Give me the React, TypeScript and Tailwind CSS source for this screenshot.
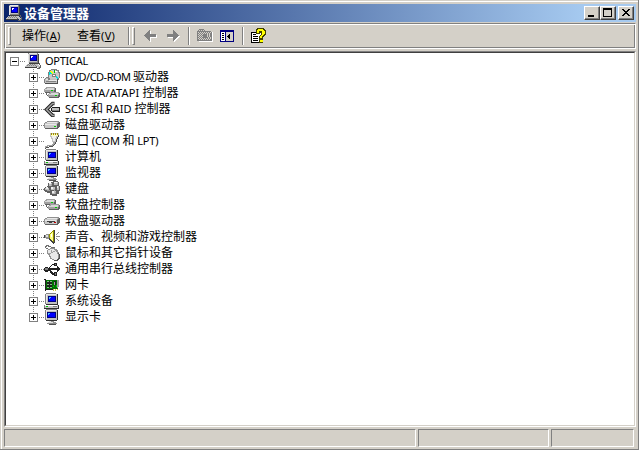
import type { ReactNode } from 'react';

function Icon({ children, size = 16 }: { children: ReactNode; size?: number }) {
    return (
        <svg width={size} height={16} viewBox={`0 0 ${size} 16`} shapeRendering="crispEdges" className="block shrink-0">
            {children}
        </svg>
    );
}

/* Root node and title bar: PC with a keyboard and a connector in front */
function ManagerIcon() {
    return (
        <Icon>
            <path fill="#c0c0c0" d="M4 1h8v9H4z" />
            <path fill="#e8e8e8" d="M4 0h8v1H4zM3 1h1v9H3z" />
            <path fill="#808080" d="M3 0h1v1H3zM12 0h1v10h-1zM4 9h8v1H4z" />
            <path fill="#404040" d="M13 1h1v10H4v-1h9z" />
            <path fill="#000080" d="M5 2h7v6H5z" />
            <path fill="#0000ff" d="M6 3h5v4H6z" />
            <path fill="#fff" d="M6 3h2v1H7v1H6z" />
            <path fill="#c0c0c0" d="M2 11h10v1h1v2H0v-1h1v-1h1z" />
            <path fill="#808080" d="M3 11h1v1H3zM5 11h1v1H5zM7 11h1v1H7zM9 11h1v1H9zM2 12h1v1H2zM4 12h1v1H4zM6 12h1v1H6zM8 12h1v1H8zM10 12h1v1h-1z" />
            <path fill="#404040" d="M0 14h12v1H0z" />
            <path fill="#c0c0c0" d="M11 11h2v1h1v1h1v2h-2v-1h-1v-1h-1z" />
            <path fill="#606060" d="M14 10h1v2h1v3h-1v1h-3v-1h2v-1h1v-2h-1zM11 13h1v1h-1z" />
        </Icon>
    );
}

function DvdIcon() {
    return (
        <Icon>
            <path fill="#808080" d="M7 0h6v1h2v2h1v6h-1v2h-2v2H7v-1H5v-1H4V3h1V1h2z" />
            <path fill="#c8c8c8" d="M7 1h5v1h2v2h1v5h-1v1h-1v1H7v-1H6V9H5V3h1V2h1z" />
            <path fill="#ffff00" d="M6 2h2v1h1v2H8V4H6z" />
            <path fill="#00e0e0" d="M5 3h2v1h1v1H6v1H5zM12 7h1v1h1v2h-1V9h-1z" />
            <path fill="#00c000" d="M10 1h1v3h-1z" />
            <path fill="#808080" d="M8 5h4v3H8z" />
            <path fill="#fff" d="M9 6h2v1H9zM11 2h2v1h-2z" />
            <path fill="#c0c0c0" d="M2 8h3v2h8v4H0v-4h2z" />
            <path fill="#808080" d="M2 8h2v1H2v1H1v1H0v-1h1V9h1zM4 8h1v2h1v1H4zM2 12h10v1H2zM0 11h1v3H0z" />
            <path fill="#e8e8e8" d="M2 10h2v1H2zM5 11h8v1H5z" />
            <path fill="#505050" d="M1 14h12v-4h1v5H1z" />
        </Icon>
    );
}

function ControllerIcon() {
    return (
        <Icon>
            <path fill="#a0a0a0" d="M2 2h9v1h1v4h-1v1H1V7H0V4h1V3h1z" />
            <path fill="#d8d8d8" d="M3 3h7v1H3zM1 4h9v1H1z" />
            <path fill="#606060" d="M11 3h1v4h-1v1H1V7h9V5h1z" />
            <path fill="#606060" d="M2 8h1v2h1v1H3v-1H2z" />
            <path fill="#a0a0a0" d="M6 7h9v1h1v4h-1v1H5v-1H4V9h1V8h1z" />
            <path fill="#d8d8d8" d="M7 8h7v1H7zM5 9h9v1H5z" />
            <path fill="#606060" d="M15 8h1v4h-1v1H5v-1h9v-2h1z" />
            <path fill="#00d000" d="M7 5h2v1H7zM11 10h2v1h-2z" />
        </Icon>
    );
}

function ScsiIcon() {
    return (
        <Icon>
            <g shapeRendering="auto" fill="none" strokeLinejoin="miter">
                <path stroke="#202020" strokeWidth="3.6" d="M10.5 2.5 8.5 2.5 2.5 8.5 8.5 14.5 10.5 14.5" />
                <path stroke="#a0a0a0" strokeWidth="1.5" d="M10.5 2.5 8.5 2.5 2.5 8.5 8.5 14.5 10.5 14.5" />
            </g>
            <path fill="#202020" d="M8 6h8v5H8v-1H7V7h1z" />
            <path fill="#c0c0c0" d="M8 7h7v3H8z" />
            <path fill="#808080" d="M8 9h7v1H8z" />
        </Icon>
    );
}

function DriveIcon({ floppy = false }: { floppy?: boolean }) {
    return (
        <Icon>
            <path fill="#909090" d="M3 4h12v1h1v5h-1v1h-1v1H1v-1H0V6h1V5h2z" />
            <path fill="#c8c8c8" d="M3 5h11v1H3zM1 6h12v5H1z" />
            <path fill="#e8e8e8" d="M3 5h10v1H3zM1 7h11v1H1z" />
            <path fill="#606060" d="M15 5h1v5h-1v1h-1v1H1v-1h12V7h1V6h1z" />
            {floppy ? (
                <>
                    <path fill="#404040" d="M3 8h8v1H3zM5 9h3v1H5z" />
                    <path fill="#c00000" d="M10 9h2v1h-2z" />
                </>
            ) : (
                <path fill="#00d000" d="M10 9h2v1h-2z" />
            )}
        </Icon>
    );
}

function PortIcon() {
    return (
        <Icon>
            <path fill="#c0c0c0" d="M6 0h9v4h-1v2h-1v3h-1v1H9V9H8V6H7V4H6z" />
            <path fill="#ffffc0" d="M7 1h7v2H7z" />
            <path fill="#a09000" d="M7 0h1v2H7zM9 0h1v2H9zM11 0h1v2h-1zM13 0h1v2h-1z" />
            <path fill="#f0f0f0" d="M8 3h4v2h-1v3H9V5H8z" />
            <path fill="#505050" d="M14 2h1v2h-1v2h-1v3h-1v2h-1v1h-1v1H9v1H5v1H2v1H1v-1h1v-1h3v-1h4v-1h1v-1h1V9h1V6h1V4h1z" />
            <path fill="#a0a0a0" d="M9 9h2v2h-1v1H9v1H4v1H2v1H1v-2h2v-1h5v-1h1z" />
        </Icon>
    );
}

function ComputerIcon() {
    return (
        <Icon>
            <path fill="#c0c0c0" d="M2 1h11v10H2z" />
            <path fill="#808080" d="M1 1h1v10H1zM2 0h10v1H2z" />
            <path fill="#e8e8e8" d="M2 1h10v1H2zM2 2h1v8H2z" />
            <path fill="#303030" d="M13 1h1v11H2v-1h11z" />
            <path fill="#000080" d="M4 3h8v6H4z" />
            <path fill="#0000ff" d="M5 4h6v4H5z" />
            <path fill="#40c0ff" d="M5 4h2v1H6v1H5z" />
            <path fill="#c8c8c8" d="M1 12h13v3H1z" />
            <path fill="#fff" d="M1 12h12v1H1z" />
            <path fill="#808080" d="M0 12h1v3H0zM9 13h4v1H9z" />
            <path fill="#00c000" d="M2 13h2v1H2z" />
            <path fill="#303030" d="M14 12h1v4H0v-1h14z" />
        </Icon>
    );
}

function MonitorIcon() {
    return (
        <Icon>
            <path fill="#c0c0c0" d="M2 1h11v10H2z" />
            <path fill="#808080" d="M2 0h11v1H2zM1 1h1v10H1z" />
            <path fill="#e8e8e8" d="M2 1h10v1H2zM2 2h1v8H2z" />
            <path fill="#303030" d="M13 1h1v10h-1v1H2v-1h11z" />
            <path fill="#000080" d="M3 3h9v6H3z" />
            <path fill="#0000ff" d="M4 4h7v4H4z" />
            <path fill="#40c0ff" d="M4 4h2v1H5v1H4z" />
            <path fill="#909090" d="M5 12h5v1h2v1h1v1H3v-1h1v-1h1z" />
            <path fill="#e0e0e0" d="M5 12h2v1h2v1H4v-1h1z" />
            <path fill="#505050" d="M5 15h7v1H5z" />
        </Icon>
    );
}

function KeyboardIcon() {
    return (
        <Icon>
            <path fill="#606060" d="M4 2h3V1h2V0h5v1h1v4h1v5h-1v3h-2v2H8v-1H6v-2H3v-1H1v-1H0V7h1V6h2V5h1z" />
            <path fill="#c0c0c0" d="M5 2h3v3H5zM10 1h4v3h-4zM1 7h4v2H1zM7 6h4v3H7zM8 10h4v3H8zM13 5h2v4h-2z" />
            <path fill="#f0f0f0" d="M5 2h2v1H5zM10 1h3v1h-3zM2 6h2v2H2zM7 6h2v2H7zM13 5h1v2h-1zM8 10h2v2H8z" />
            <path fill="#a0a0a0" d="M7 3h1v2H7zM13 2h1v2h-1zM3 9h3v1H3zM10 8h1v2h-1zM11 11h1v2h-1z" />
        </Icon>
    );
}

function SoundIcon() {
    return (
        <Icon>
            <path fill="#909000" d="M9 1h1v13H9v-1H8v-1H7v-1H6v-1H5V5h1V4h1V3h1V2h1z" />
            <path fill="#ffff80" d="M6 5h1V4h1V3h1v9H8v-1H7v-1H6z" />
            <path fill="#fff" d="M7 5h1v3H7z" />
            <path fill="#909090" d="M1 6h1V5h3v5H2V9H1z" />
            <path fill="#e0e0e0" d="M2 6h2v2H2z" />
            <path fill="#404040" d="M0 6h1v3H0zM1 9h1v1h3v1h1v1h1v1h1v1h1v1h1v-1h1V1h-1v12H9v-1H8v-1H7v-1H6V9H5v1H2V9z" />
            <path fill="#909090" d="M12 5h1V4h1V3h1v1h-1v1h-1v1h-1zM12 7h4v1h-4zM12 9h1v1h1v1h1v1h-1v-1h-1v-1h-1z" />
        </Icon>
    );
}

function MouseIcon() {
    return (
        <Icon>
            <path fill="#707070" d="M2 0h3v1h2v1h4v1H7V2H4V1H3v1H1V1h1zM1 2h1v1h2v1H2V3H1z" />
            <path fill="#909090" d="M6 3h5v1h2v1h1v2h1v2h1v5h-1v1h-1v1h-4v-1H8v-1H6v-2H5v-2H4V9H3V5h1V4h2z" />
            <path fill="#e8e8e8" d="M6 4h4v1h2v2h1v2h1v5h-1v1h-3v-1H8v-1H7v-2H6V9H5V8H4V5h2z" />
            <path fill="#a0a0a0" d="M4 8h3V7h2V6h2V5h1v1h-1v1H9v1H7v1H4zM7 5h1v2H7z" />
            <path fill="#505050" d="M14 8h1v1h1v5h-1v1h-1v1h-4v-1h3v-1h1v-1h1V9h-1z" />
        </Icon>
    );
}

function UsbIcon() {
    return (
        <Icon>
            <path fill="#202020" d="M0 7h1V6h3v1h1V6h1V5h1V4h1V3h2V2h3v3h-3V4H8v1H7v1H6v1h7V5h1v1h1v1h1v2h-1v1h-1v1h-1V9H7v1h1v1h1v1h1v-1h3v4h-3v-1H8v-1H7v-1H6v-2H4v1H1v-1H0z" />
            <path fill="#808080" d="M1 7h3v2H1zM11 3h1v1h-1zM11 12h1v2h-1z" />
        </Icon>
    );
}

function NetworkIcon() {
    return (
        <Icon>
            <path fill="#007000" d="M2 3h12v9H2z" />
            <path fill="#202020" d="M0 2h2v12H1V3H0zM3 4h5v7H3zM10 4h2v4h-2zM2 12h7v1H2z" />
            <path fill="#80c080" d="M3 4h2v1H3zM6 4h2v1H6zM3 7h2v1H3zM6 7h2v1H6zM3 10h2v1H3zM6 10h2v1H6z" />
            <path fill="#00d000" d="M9 9h1v1H9zM12 8h1v2h-1z" />
            <path fill="#a0a0a0" d="M10 5h1v3h-1zM13 3h2v7h-1v1h-1z" />
            <path fill="#d0c040" d="M9 12h1v2H9zM11 12h1v2h-1zM13 12h1v1h-1z" />
        </Icon>
    );
}

const devices = [
    { label: 'DVD/CD-ROM 驱动器', icon: <DvdIcon />, tracking: 'tracking-[-0.5px]' },
    { label: 'IDE ATA/ATAPI 控制器', icon: <ControllerIcon />, tracking: 'tracking-[0.15px]' },
    { label: 'SCSI 和 RAID 控制器', icon: <ScsiIcon />, tracking: 'tracking-[0.05px]' },
    { label: '磁盘驱动器', icon: <DriveIcon /> },
    { label: '端口 (COM 和 LPT)', icon: <PortIcon />, tracking: 'tracking-[-0.15px]' },
    { label: '计算机', icon: <ComputerIcon /> },
    { label: '监视器', icon: <MonitorIcon /> },
    { label: '键盘', icon: <KeyboardIcon /> },
    { label: '软盘控制器', icon: <ControllerIcon /> },
    { label: '软盘驱动器', icon: <DriveIcon floppy /> },
    { label: '声音、视频和游戏控制器', icon: <SoundIcon /> },
    { label: '鼠标和其它指针设备', icon: <MouseIcon /> },
    { label: '通用串行总线控制器', icon: <UsbIcon /> },
    { label: '网卡', icon: <NetworkIcon /> },
    { label: '系统设备', icon: <ComputerIcon /> },
    { label: '显示卡', icon: <MonitorIcon /> },
];

// Latin runs are set a pixel smaller than the Chinese ones
function Label({ text, tracking = 'tracking-[-0.25px]' }: { text: string; tracking?: string }) {
    const runs = text.match(/[\x20-\x7e]+|[^\x20-\x7e]+/g) ?? [];

    return (
        <span className="flex h-4 items-center whitespace-pre leading-4">
            {runs.map((run, i) => (
                <span key={i} className={run.charCodeAt(0) < 128 ? `text-[11px] ${tracking}` : 'text-[12px]'}>
                    {run}
                </span>
            ))}
        </span>
    );
}

function Expander({ open = false }: { open?: boolean }) {
    return (
        <svg width="9" height="16" viewBox="0 0 9 16" shapeRendering="crispEdges" className="block shrink-0">
            <path fill="#808080" d="M0 4h9v9H0z" />
            <path fill="#fff" d="M1 5h7v7H1z" />
            <path fill="#000" d="M2 8h5v1H2z" />
            {!open && <path fill="#000" d="M4 6h1v5H4z" />}
        </svg>
    );
}

function Dots() {
    return (
        <svg width="6" height="16" viewBox="0 0 6 16" shapeRendering="crispEdges" className="block shrink-0">
            <path fill="#808080" d="M1 8h1v1H1zM3 8h1v1H3zM5 8h1v1H5z" />
        </svg>
    );
}

function CaptionButton({ children }: { children: ReactNode }) {
    return (
        <button className="h-[14px] w-4 border border-t-white border-l-white border-r-[#404040] border-b-[#404040] bg-[#d4d0c8] shadow-[inset_-1px_-1px_0_#808080]">
            <svg width="14" height="12" viewBox="0 0 14 12" shapeRendering="crispEdges" className="block">
                {children}
            </svg>
        </button>
    );
}

function Gripper() {
    return <div className="h-[18px] w-[3px] shrink-0 border border-t-white border-l-white border-r-[#808080] border-b-[#808080]" />;
}

function Separator() {
    return <div className="h-[18px] w-[2px] shrink-0 border-l border-r border-l-[#808080] border-r-white" />;
}

function MenuItem({ text, accessKey }: { text: string; accessKey: string }) {
    return (
        <span className="flex w-[55px] shrink-0 items-center text-[12px] leading-4">
            {text}
            <span className="text-[11px] tracking-[0.3px]">
                (<span className="underline underline-offset-1">{accessKey}</span>)
            </span>
        </span>
    );
}

const arrowLeft = 'M0 5h1V4h1V3h1V2h1V1h1V0h1v4h6v3H6v4H5v-1H4V9H3V8H2V7H1V6H0z';
const arrowRight = 'M12 5h-1V4h-1V3H9V2H8V1H7V0H6v4H0v3h6v4h1v-1h1V9h1V8h1V7h1V6h1z';

function ArrowIcon({ d }: { d: string }) {
    return (
        <svg width="14" height="12" viewBox="0 0 14 12" shapeRendering="crispEdges" className="block shrink-0">
            <path d={d} fill="#fff" transform="translate(1 1)" />
            <path d={d} fill="#808080" />
        </svg>
    );
}

function Toolbar() {
    return (
        <div className="flex h-[26px] items-center border border-[#808080] border-r-white border-b-white pl-[3px] shadow-[inset_1px_1px_0_#fff,inset_-1px_-1px_0_#808080]">
            <Gripper />
            <div className="flex pl-[11px]">
                <MenuItem text="操作" accessKey="A" />
                <MenuItem text="查看" accessKey="V" />
            </div>
            <div className="-ml-1 flex gap-[2px]">
                <Separator />
                <Gripper />
            </div>
            <div className="flex flex-1 items-center pl-[9px]">
                <ArrowIcon d={arrowLeft} />
                <div className="w-[9px]" />
                <ArrowIcon d={arrowRight} />
                <div className="w-[7px]" />
                <Separator />
                <div className="w-[7px]" />
                <Icon>
                    <path fill="#fff" d="M3 3h5v1h8v10H2v-1h13V4H8z" />
                    <path fill="#808080" d="M2 1h5v1h1v1h6v1h1v9H0V3h1V2h1z" />
                    <path
                        fill="none"
                        stroke="#d4d0c8"
                        strokeDasharray="1 1"
                        d="M2 2.5h5M1 4.5h13M2 5.5h12M1 6.5h5M10 6.5h4M2 7.5h4M10 7.5h4M1 8.5h5M10 8.5h4M2 9.5h3M11 9.5h3M1 10.5h13M2 11.5h12"
                    />
                </Icon>
                <div className="w-[7px]" />
                <Icon size={15}>
                    <path fill="#000080" d="M0 2h14v12H0z" />
                    <path fill="#fff" d="M1 4h4v9H1z" />
                    <path fill="#d4d0c8" d="M6 4h7v9H6z" />
                    <path fill="#000" d="M2 5h2v1H2zM2 7h2v1H2zM2 9h2v1H2zM2 11h2v1H2zM7 8h1V7h1V6h1v5H9v-1H8V9H7z" />
                </Icon>
                <div className="w-[7px]" />
                <Separator />
                <div className="w-[7px]" />
                <Icon>
                    <path fill="#000" d="M0 4h9v11H0z" />
                    <path fill="#fff" d="M1 5h9v9H1z" />
                    <path fill="#000" d="M2 6h3v1H2zM2 8h5v1H2zM2 10h5v1H2zM2 12h5v1H2zM10 9h1v6H1v-1h9z" />
                    <path fill="#404000" d="M6 0h7v1h1v1h1v5h-1v1h-1v1h-1v6H8V8h1V7h1V5H9v1H5V1h1z" />
                    <path fill="#ffff00" d="M7 1h5v1h1v1h1v3h-1v1h-1v1h-1v2H9V8h1V7h1V3H8v2H6V2h1zM9 12h3v2H9z" />
                </Icon>
            </div>
        </div>
    );
}

function StatusPanel({ className }: { className: string }) {
    return <div className={`h-[18px] border border-[#808080] border-r-white border-b-white ${className}`} />;
}

export default function App() {
    return (
        <div className="h-[450px] w-[639px] overflow-hidden border-r border-b border-[#808080] bg-[#d4d0c8] pl-1 pt-1 font-['Noto_Sans','Noto_Sans_CJK_SC',sans-serif] text-black shadow-[inset_1px_1px_0_#d4d0c8,inset_2px_2px_0_#fff]">
            {/* Title bar */}
            <div className="flex h-[18px] w-[632px] items-center bg-linear-to-r/srgb from-[#0a246a] to-[#a6caf0] to-92% pl-[2px] pr-[2px]">
                <ManagerIcon />
                <span className="flex-1 pl-[2px] text-[13px] font-bold leading-[18px] text-white">设备管理器</span>
                <div className="flex">
                    <CaptionButton>
                        <path d="M3 8h6v2H3z" />
                    </CaptionButton>
                    <CaptionButton>
                        <path fillRule="evenodd" d="M2 1h9v9H2zM3 3v6h7V3z" />
                    </CaptionButton>
                    <div className="w-[2px]" />
                    <CaptionButton>
                        <path d="M3 2h2v1h1v1h2V3h1V2h2v1h-1v1H9v1H8v1h1v1h1v1h1v1H9V8H8V7H6v1H5v1H3V8h1V7h1V6h1V5H5V4H4V3H3z" />
                    </CaptionButton>
                </div>
            </div>

            <div className="mt-px w-[632px]">
                <Toolbar />

                {/* Device tree */}
                <div className="mt-[2px] h-[376px] border border-[#808080] border-r-white border-b-white">
                    <div className="h-[374px] border border-[#404040] border-r-[#d4d0c8] border-b-[#d4d0c8] bg-white pl-1">
                        <div className="flex h-4">
                            <Expander open />
                            <Dots />
                            <ManagerIcon />
                            <div className="pl-1">
                                <Label text="OPTICAL" />
                            </div>
                        </div>
                        {devices.map((device) => (
                            <div
                                key={device.label}
                                className="flex h-4 bg-[repeating-linear-gradient(#808080_0_1px,#fff_1px_2px)] bg-[length:1px_16px] bg-[position:23px_0] bg-no-repeat pl-[19px] last:bg-[length:1px_8px]"
                            >
                                <Expander />
                                <Dots />
                                {device.icon}
                                <div className="pl-[5px]">
                                    <Label text={device.label} tracking={device.tracking} />
                                </div>
                            </div>
                        ))}
                    </div>
                </div>
            </div>

            {/* Status bar */}
            <div className="mt-[2px] flex gap-[2px]">
                <StatusPanel className="w-[412px]" />
                <StatusPanel className="w-[131px]" />
                <StatusPanel className="w-[83px]" />
            </div>
        </div>
    );
}
